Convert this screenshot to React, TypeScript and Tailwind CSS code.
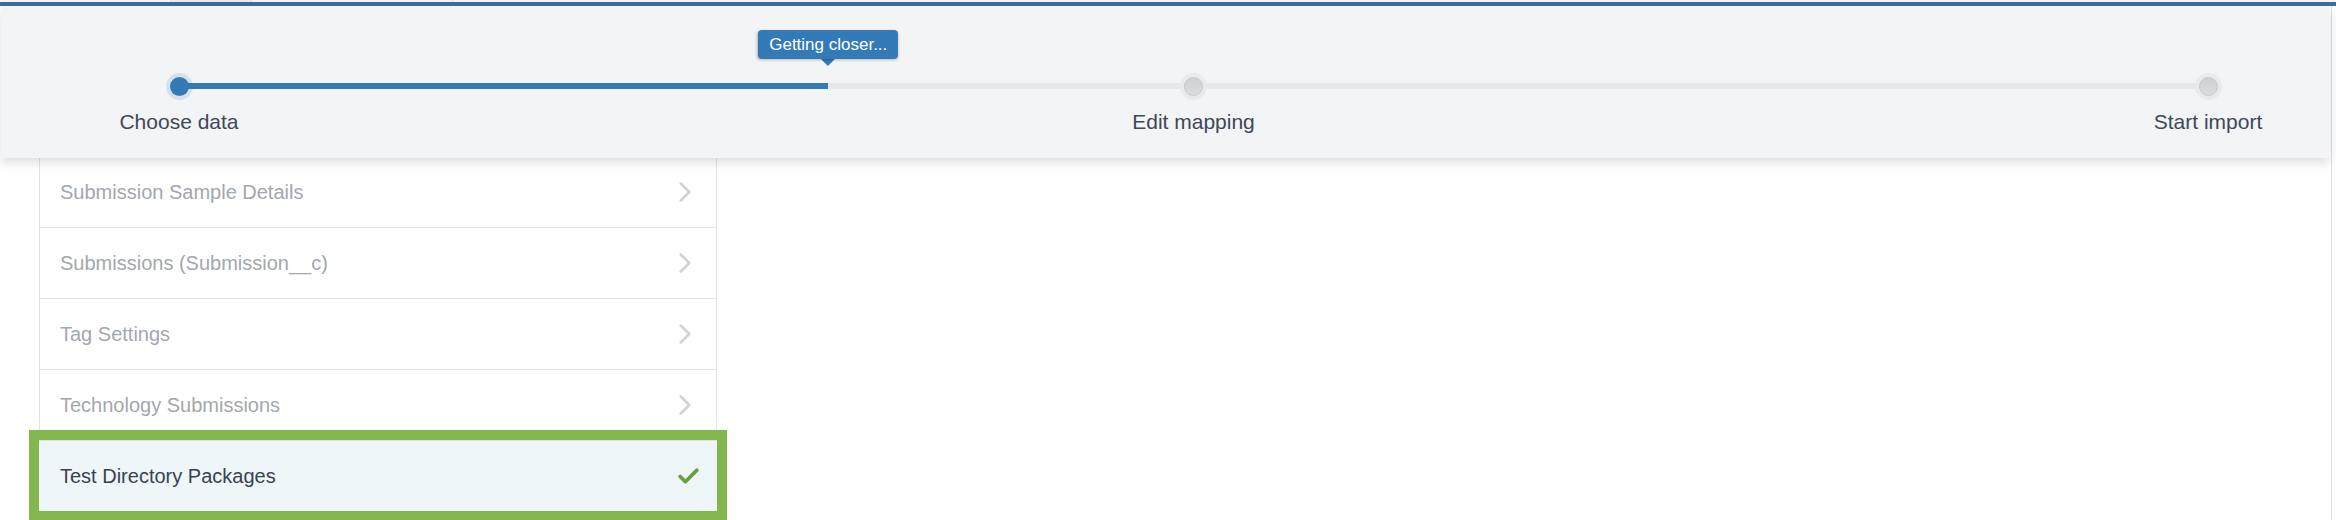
import { Check, ChevronRight } from 'lucide-react';

const rows = [
  'Submission Sample Details',
  'Submissions (Submission__c)',
  'Tag Settings',
  'Technology Submissions',
];

const steps = ['Choose data', 'Edit mapping', 'Start import'];

export default function App() {
  return (
    <div className="relative h-[520px] w-[2336px] overflow-hidden bg-white font-['Liberation_Sans',Arial,sans-serif]">
      {/* ── Top strip + brand bar ─────────────────────────────── */}
      <div className="flex h-[2px] bg-[#f4f5f6]">
        <div className="ml-[170px] w-[82px] border-x border-[#dfe2e5] bg-[#e9ecef]" />
        <div className="ml-[200px] w-px bg-[#dfe2e5]" />
      </div>
      <div className="h-[4px] bg-[#3c6d9b]" />

      <div className="flex">
        <div className="ml-[1px] w-[2329px]">
          {/* ── Wizard header ─────────────────────────────────── */}
          <header className="relative z-10 h-[152px] bg-[#f3f4f6] shadow-[0_5px_10px_rgba(0,0,0,0.13)]">
            <div className="relative ml-[178px] mr-[122px] pt-[71px]">
              <div className="absolute left-0 right-0 top-[77px] h-[6px] bg-[#e6e7eb]">
                <div className="h-full w-[32%] bg-[#337ab7]" />
              </div>

              <div className="absolute left-[32%] top-[24px] -translate-x-1/2">
                <div className="relative flex h-[29px] items-center whitespace-nowrap rounded-[4px] bg-[#337ab7] px-[11px] text-[17px] text-white shadow-[0_1px_3px_rgba(0,0,0,0.25)]">
                  Getting closer...
                </div>
                <div className="mx-auto h-0 w-0 border-x-[7px] border-t-[7px] border-x-transparent border-t-[#337ab7]" />
              </div>

              <div className="relative flex justify-between">
                {steps.map((s, i) => (
                  <div key={s} className="flex w-0 flex-col items-center">
                    {i === 0 ? (
                      <div className="h-[19px] w-[19px] shrink-0 rounded-full bg-[#337ab7] ring-4 ring-[#337ab7]/15" />
                    ) : (
                      <div className="h-[19px] w-[19px] shrink-0 rounded-full border border-[#c5c6c9] bg-gradient-to-b from-[#cfd0d3] to-[#dcdde0] ring-4 ring-[#e9eaec]" />
                    )}
                    <div className="mt-[14px] whitespace-nowrap text-[21px] leading-[24px] text-[#3e4857]">{s}</div>
                  </div>
                ))}
              </div>
            </div>
          </header>

          {/* ── Object list ───────────────────────────────────── */}
          <div className="-mt-[1px] ml-[38px] w-[678px] border-x border-[#e3e4e6]">
            {rows.map((r) => (
              <div
                key={r}
                className="flex h-[71px] items-center justify-between border-b border-[#e4e5e7] pl-[20px] pr-[14px] text-[20px] text-[#a3a7ae]"
              >
                <span>{r}</span>
                <ChevronRight className="h-[34px] w-[34px] text-[#cfd2d6]" strokeWidth={1.8} />
              </div>
            ))}
            <div className="-mx-px mt-[-1px] flex h-[71px] items-center justify-between border-t border-[#dfe3e6] bg-[#eef6fa] pl-[21px] pr-[16px] text-[20px] text-[#39424f] outline outline-[10px] outline-[#84b64f]">
              <span>Test Directory Packages</span>
              <Check className="h-[25px] w-[25px] text-[#6a9f35]" strokeWidth={3.6} />
            </div>
          </div>
        </div>
        <div className="ml-px h-[514px] w-px bg-[#e0e1e3]" />
      </div>
    </div>
  );
}
